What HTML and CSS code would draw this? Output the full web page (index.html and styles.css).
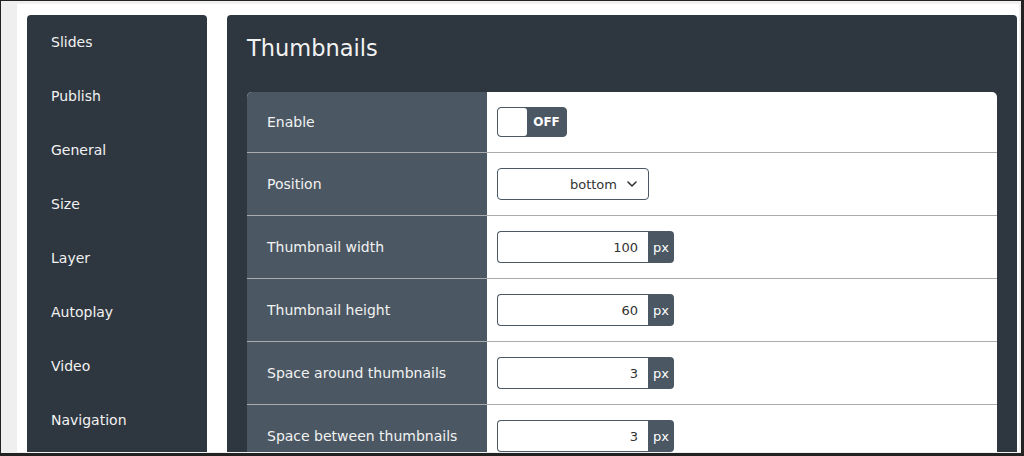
FILE: index.html
```html
<!DOCTYPE html>
<html lang="en">
<head>
    <meta charset="UTF-8">
    <meta name="viewport" content="width=device-width, initial-scale=1.0">
    <title>Thumbnails settings</title>
    <link rel="stylesheet" href="styles.css">
</head>
<body>
    <div class="frame">
        <div class="page">
            <nav class="sidebar">
                <a class="nav-item" href="#">Slides</a>
                <a class="nav-item" href="#">Publish</a>
                <a class="nav-item" href="#">General</a>
                <a class="nav-item" href="#">Size</a>
                <a class="nav-item" href="#">Layer</a>
                <a class="nav-item" href="#">Autoplay</a>
                <a class="nav-item" href="#">Video</a>
                <a class="nav-item" href="#">Navigation</a>
            </nav>

            <main class="panel">
                <h1>Thumbnails</h1>
                <div class="settings">
                    <div class="row">
                        <div class="label">Enable</div>
                        <div class="field">
                            <button class="toggle">
                                <span class="knob"></span>
                                <span class="toggle-text">OFF</span>
                            </button>
                        </div>
                    </div>
                    <div class="row">
                        <div class="label">Position</div>
                        <div class="field">
                            <div class="select">
                                <span>bottom</span>
                                <svg class="chevron" width="10" height="6" viewBox="0 0 10 6">
                                    <path d="M1 1l4 4 4-4" fill="none" stroke="#333" stroke-width="1.6" stroke-linecap="round" stroke-linejoin="round"/>
                                </svg>
                            </div>
                        </div>
                    </div>
                    <div class="row">
                        <div class="label">Thumbnail width</div>
                        <div class="field">
                            <div class="input-group">
                                <input class="input" type="text" value="100">
                                <span class="unit">px</span>
                            </div>
                        </div>
                    </div>
                    <div class="row">
                        <div class="label">Thumbnail height</div>
                        <div class="field">
                            <div class="input-group">
                                <input class="input" type="text" value="60">
                                <span class="unit">px</span>
                            </div>
                        </div>
                    </div>
                    <div class="row">
                        <div class="label">Space around thumbnails</div>
                        <div class="field">
                            <div class="input-group">
                                <input class="input" type="text" value="3">
                                <span class="unit">px</span>
                            </div>
                        </div>
                    </div>
                    <div class="row">
                        <div class="label">Space between thumbnails</div>
                        <div class="field">
                            <div class="input-group">
                                <input class="input" type="text" value="3">
                                <span class="unit">px</span>
                            </div>
                        </div>
                    </div>
                </div>
            </main>
        </div>
    </div>
</body>
</html>
```

FILE: styles.css
```css
:root {
    --dark: #2e3740;
    --slate: #4b5863;
    --line: #a8acaf;
    --text: #333;
    --light: #f2f2f2;
}

* {
    margin: 0;
    padding: 0;
    box-sizing: border-box;
}

body {
    font-family: 'DejaVu Sans', sans-serif;
    font-size: 14px;
    color: var(--text);
    background: #222;
    overflow: hidden;
}

.frame {
    width: 1024px;
    height: 456px;
    background: #efefef;
    border-style: solid;
    border-color: #222;
    border-width: 1px 3px 3px 1px;
    padding: 3px 2px 1px 16px;
}

.page {
    height: 100%;
    background: white;
    padding: 11px 2px 0 10px;
    display: flex;
    gap: 20px;
    overflow: hidden;
}

.sidebar {
    width: 180px;
    flex-shrink: 0;
    background: var(--dark);
    border-radius: 4px 4px 0 0;
    display: flex;
    flex-direction: column;
}

.nav-item {
    height: 54px;
    display: flex;
    align-items: center;
    padding-left: 24px;
    color: var(--light);
    text-decoration: none;
}

.panel {
    flex: 1;
    background: var(--dark);
    border-radius: 4px 4px 0 0;
    padding: 20px 20px 0;
}

h1 {
    font-size: 22.5px;
    font-weight: 400;
    line-height: 26px;
    color: var(--light);
    margin-bottom: 31px;
}

.settings {
    background: white;
    border-radius: 5px 5px 0 0;
    overflow: hidden;
}

.row {
    display: flex;
    border-bottom: 1px solid var(--line);
}

.label {
    width: 240px;
    flex-shrink: 0;
    background: var(--slate);
    color: var(--light);
    display: flex;
    align-items: center;
    padding-left: 20px;
}

.field {
    padding: 15px 10px;
    display: flex;
    align-items: center;
}

.toggle {
    width: 70px;
    height: 30px;
    display: flex;
    border: 1px solid var(--slate);
    border-radius: 4px;
    background: var(--slate);
    overflow: hidden;
    font-family: inherit;
}

.knob {
    width: 29px;
    height: 100%;
    background: white;
    border-radius: 3px;
}

.toggle-text {
    flex: 1;
    align-self: center;
    color: white;
    font-size: 12px;
    font-weight: 700;
    text-align: center;
}

.select {
    width: 152px;
    height: 32px;
    border: 1px solid var(--slate);
    border-radius: 4px;
    display: flex;
    align-items: center;
    justify-content: flex-end;
    gap: 10px;
    padding-right: 11px;
    font-size: 13px;
}

.input-group {
    display: flex;
    height: 32px;
}

.input {
    width: 151px;
    height: 100%;
    border: 1px solid var(--slate);
    border-right: none;
    border-radius: 4px 0 0 4px;
    text-align: right;
    padding-right: 10px;
    font-family: inherit;
    font-size: 13px;
    color: var(--text);
    outline: none;
}

.unit {
    width: 26px;
    background: var(--slate);
    color: white;
    border-radius: 0 4px 4px 0;
    display: flex;
    align-items: center;
    justify-content: center;
    font-size: 13px;
}
```
